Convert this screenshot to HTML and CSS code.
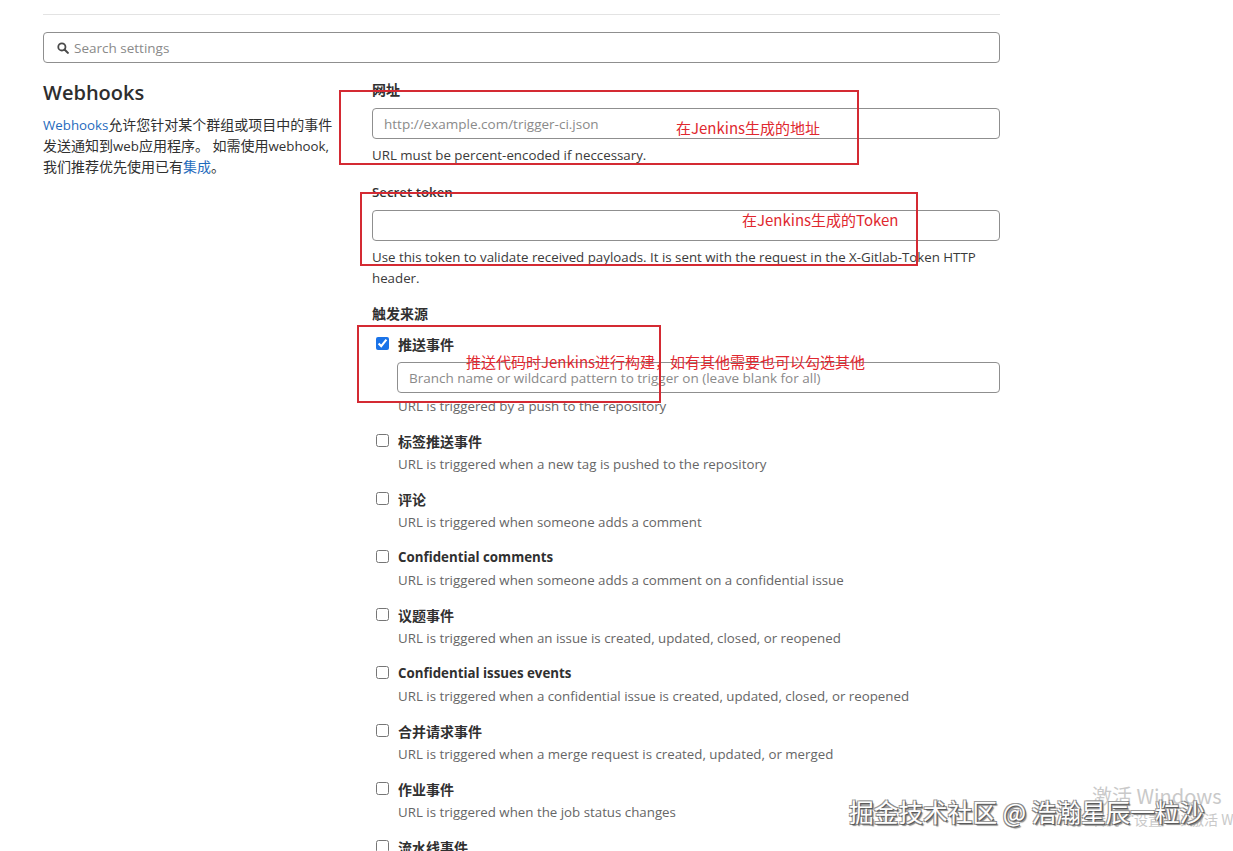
FILE: index.html
```html
<!DOCTYPE html>
<html lang="zh-CN">
<head>
<meta charset="utf-8">
<title>Webhooks</title>
<link rel="stylesheet" href="styles.css">
</head>
<body>
<div class="page">
  <div class="top-rule"></div>
  <div class="search">
    <svg class="search-icon" width="12" height="12" viewBox="0 0 16 16"><circle cx="6.5" cy="6.5" r="4.8" fill="none" stroke="#4a4a4a" stroke-width="2.4"/><path d="M10 10 L14.5 14.5" stroke="#4a4a4a" stroke-width="2.8" stroke-linecap="round"/></svg>
    <span class="search-placeholder">Search settings</span>
  </div>

  <div class="settings">
    <div class="intro">
      <h4 class="intro-title">Webhooks</h4>
      <p class="intro-text"><a class="link latin">Webhooks</a>允许您针对某个群组或项目中的事件发送通知到<span class="latin">web</span>应用程序。 如需使用<span class="latin">webhook,</span>我们推荐优先使用已有<a class="link">集成</a>。</p>
    </div>

    <div class="form">
      <div class="group">
        <div class="label cjk">网址</div>
        <div class="input"><span class="placeholder">http://example.com/trigger-ci.json</span></div>
        <div class="help">URL must be percent-encoded if neccessary.</div>
      </div>
      <div class="group group-token">
        <div class="label">Secret token</div>
        <div class="input"></div>
        <div class="help">Use this token to validate received payloads. It is sent with the request in the X-Gitlab-Token HTTP header.</div>
      </div>
      <div class="group group-triggers">
        <div class="label cjk">触发来源</div>
        <div class="trigger">
          <div class="check-row"><input type="checkbox" class="box" checked><span class="check-label cjk">推送事件</span></div>
          <div class="input input-branch"><span class="placeholder">Branch name or wildcard pattern to trigger on (leave blank for all)</span></div>
          <div class="desc">URL is triggered by a push to the repository</div>
        </div>
        <div class="trigger">
          <div class="check-row"><input type="checkbox" class="box"><span class="check-label cjk">标签推送事件</span></div>
          <div class="desc">URL is triggered when a new tag is pushed to the repository</div>
        </div>
        <div class="trigger">
          <div class="check-row"><input type="checkbox" class="box"><span class="check-label cjk">评论</span></div>
          <div class="desc">URL is triggered when someone adds a comment</div>
        </div>
        <div class="trigger">
          <div class="check-row"><input type="checkbox" class="box"><span class="check-label">Confidential comments</span></div>
          <div class="desc">URL is triggered when someone adds a comment on a confidential issue</div>
        </div>
        <div class="trigger">
          <div class="check-row"><input type="checkbox" class="box"><span class="check-label cjk">议题事件</span></div>
          <div class="desc">URL is triggered when an issue is created, updated, closed, or reopened</div>
        </div>
        <div class="trigger">
          <div class="check-row"><input type="checkbox" class="box"><span class="check-label">Confidential issues events</span></div>
          <div class="desc">URL is triggered when a confidential issue is created, updated, closed, or reopened</div>
        </div>
        <div class="trigger">
          <div class="check-row"><input type="checkbox" class="box"><span class="check-label cjk">合并请求事件</span></div>
          <div class="desc">URL is triggered when a merge request is created, updated, or merged</div>
        </div>
        <div class="trigger">
          <div class="check-row"><input type="checkbox" class="box"><span class="check-label cjk">作业事件</span></div>
          <div class="desc">URL is triggered when the job status changes</div>
        </div>
        <div class="trigger">
          <div class="check-row"><input type="checkbox" class="box"><span class="check-label cjk">流水线事件</span></div>
          <div class="desc">URL is triggered when the pipeline status changes</div>
        </div>
      </div>
    </div>
  </div>
</div>

<div class="mark mark-1"></div>
<div class="mark mark-2"></div>
<div class="mark mark-3"></div>
<div class="note note-1">在Jenkins生成的地址</div>
<div class="note note-2">在Jenkins生成的Token</div>
<div class="note note-3">推送代码时Jenkins进行构建，如有其他需要也可以勾选其他</div>

<div class="activate">
  <div class="activate-title">激活 Windows</div>
  <div class="activate-sub">转到“设置”以激活 Windows。</div>
</div>
<div class="watermark">掘金技术社区 @ 浩瀚星辰一粒沙</div>
</body>
</html>
```

FILE: styles.css
```css
html, body {
  margin: 0;
  padding: 0;
  width: 1233px;
  height: 851px;
  overflow: hidden;
  background: #ffffff;
}

body {
  position: relative;
  font-family: "Open Sans", "Noto Sans CJK SC", sans-serif;
  font-size: 13.3px;
  color: #303030;
}

.cjk {
  font-size: 14px;
}

.latin {
  font-size: 13.3px;
  line-height: 1;
}

.page {
  width: 957px;
  margin-left: 43px;
  padding-top: 14px;
}

.top-rule {
  border-top: 1px solid #e3e3e3;
}

.search {
  margin-top: 17px;
  height: 29px;
  border: 1px solid #8f8f8f;
  border-radius: 4px;
  display: flex;
  align-items: center;
  padding-left: 13px;
  gap: 5px;
}

.search-placeholder {
  color: #8a8a8a;
  font-size: 13.5px;
}

.settings {
  display: grid;
  grid-template-columns: 329px 628px;
  margin-top: 17px;
}

.intro-title {
  margin: 1px 0 0;
  font-size: 20px;
  line-height: 24px;
  font-weight: 600;
  color: #2e2e2e;
}

.intro-text {
  margin: 9px 0 0;
  width: 292px;
  font-size: 14px;
  line-height: 21px;
  color: #303030;
}

.link {
  color: #1f6bbd;
}

.group {
  margin-bottom: 16px;
}

.group-token {
  margin-bottom: 15px;
}

.label {
  font-weight: 600;
  line-height: 20px;
  margin-bottom: 8px;
  color: #303030;
}

.input {
  height: 29px;
  border: 1px solid #8f8f8f;
  border-radius: 4px;
  display: flex;
  align-items: center;
  padding-left: 11px;
}

.placeholder {
  color: #8a8a8a;
  font-size: 13.5px;
}

.help {
  margin-top: 6px;
  line-height: 21px;
  color: #3a3a3a;
}

.group-triggers .label {
  margin-bottom: 9px;
}

.trigger {
  margin-bottom: 13px;
}

.check-row {
  display: flex;
  align-items: center;
  height: 21px;
}

.box {
  width: 13px;
  height: 13px;
  margin: 0 9px 0 4px;
  accent-color: #1a73e8;
}

.check-label {
  font-weight: 700;
  color: #303030;
}

.input-branch {
  margin-left: 25px;
  margin-top: 8px;
  margin-bottom: 1px;
}

.desc {
  margin-left: 26px;
  margin-top: 3px;
  line-height: 21px;
  color: #666666;
}

/* annotation overlays */
.mark {
  position: absolute;
  border: 2px solid #d42a33;
}

.mark-1 { left: 339px; top: 90px; width: 516px; height: 71px; }
.mark-2 { left: 360px; top: 192px; width: 554px; height: 70px; }
.mark-3 { left: 357px; top: 325px; width: 300px; height: 74px; }

.note {
  position: absolute;
  color: #e0282f;
  font-family: "Noto Sans CJK SC", sans-serif;
  font-size: 15px;
  line-height: 18px;
  white-space: nowrap;
}

.note-1 { left: 676px; top: 119px; }
.note-2 { left: 742px; top: 211px; }
.note-3 { left: 466px; top: 353px; }

.activate {
  position: absolute;
  left: 1092px;
  top: 783px;
  color: #c9c9c9;
  white-space: nowrap;
  font-family: "Noto Sans CJK SC", sans-serif;
}

.activate-title {
  font-size: 20px;
  line-height: 26px;
}

.activate-sub {
  font-size: 14px;
  line-height: 20px;
}

.watermark {
  position: absolute;
  left: 849px;
  top: 795px;
  font-family: "Noto Sans CJK SC", sans-serif;
  font-size: 24.7px;
  line-height: 32px;
  color: #ffffff;
  white-space: nowrap;
  text-shadow: 1px 1px 0 #5a5a5a, -1px -1px 0 #9a9a9a, 1px -1px 0 #8a8a8a, -1px 1px 0 #8a8a8a, 2px 2px 1px #888888;
}
```
